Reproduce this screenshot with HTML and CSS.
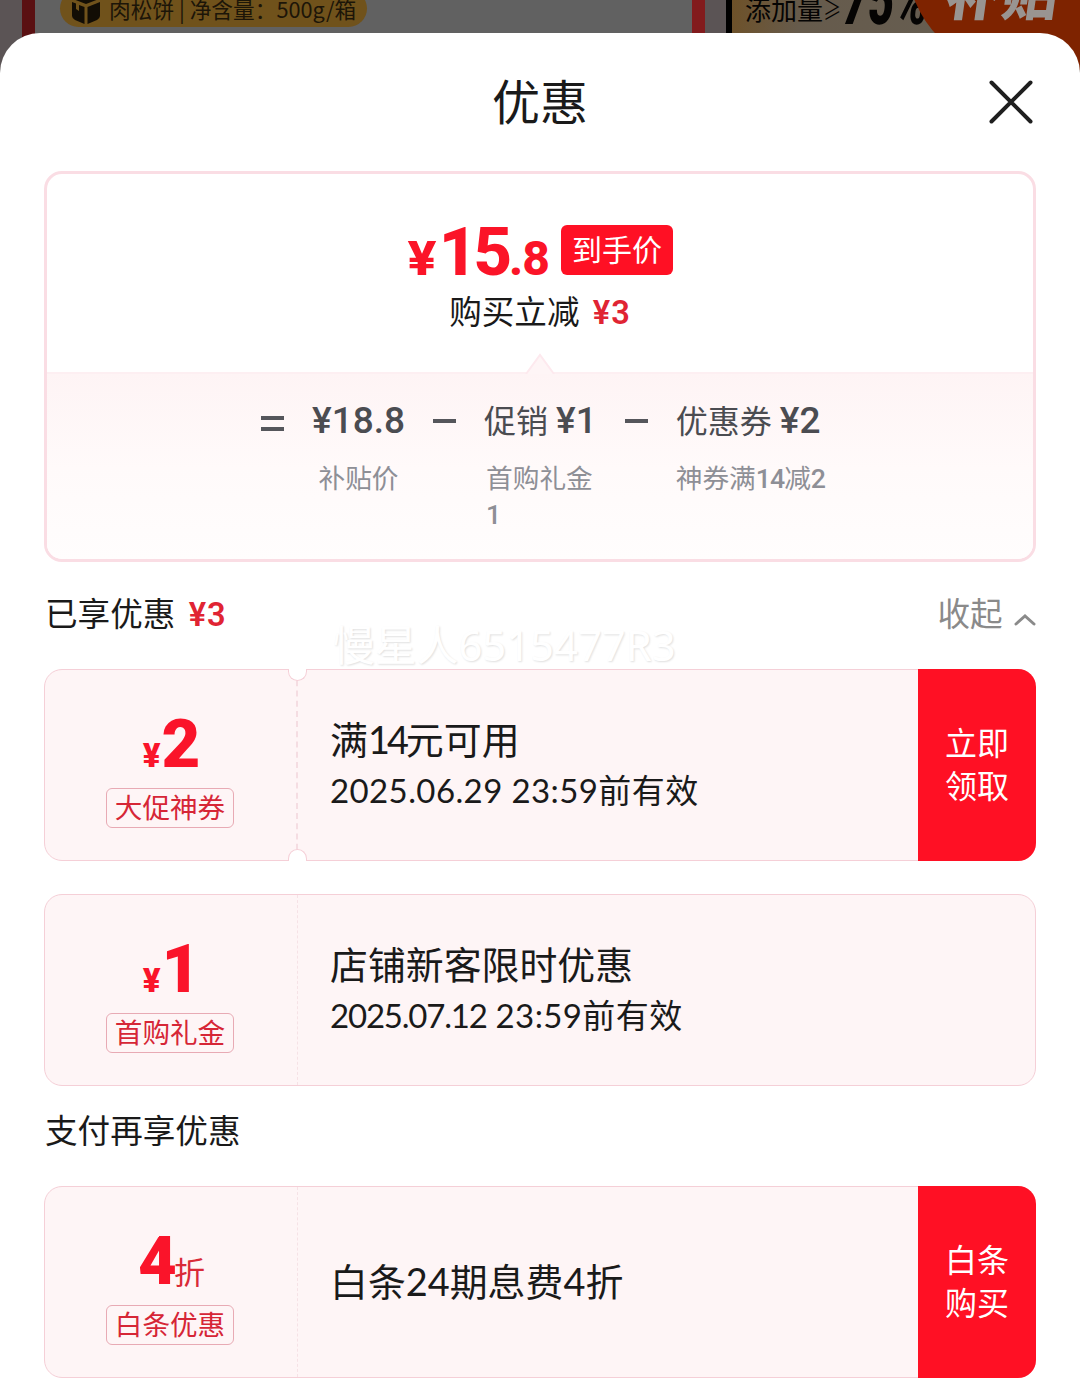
FILE: index.html
```html
<!DOCTYPE html>
<html lang="zh-CN">
<head>
  <meta charset="UTF-8">
  <title>优惠</title>
  <link rel="stylesheet" href="styles.css">
</head>
<body>

<div class="goods">
  <div class="goods-left">
    <div class="pill">
      <svg width="32" height="28" viewBox="0 0 32 28">
        <path d="M3 0 H29 V1 L16 6 L3 1Z" fill="#120d05"/>
        <path d="M2 4 L6 5.500 V11 L9 13 V7 L14.500 9 V26 L5 22 Q2 20 2 18Z M30 4 V18 Q30 20 27 22 L17.500 26 V9Z" fill="#120d05"/>
      </svg>
      <span>肉松饼 | 净含量：500g/箱</span>
    </div>
  </div>
  <div class="goods-right">
    <span class="add">添加量<i>≥</i></span>
    <b class="percent">75%</b>
    <div class="subsidy"><span>补贴</span></div>
  </div>
</div>

<div class="sheet">
  <div class="header">
    <h1>优惠</h1>
    <svg class="close" width="44" height="44" viewBox="0 0 44 44">
      <path d="M2.500 2.500 L41.500 41.500 M41.500 2.500 L2.500 41.500" stroke="#1f1f1f" stroke-width="4" stroke-linecap="round"/>
    </svg>
  </div>

  <div class="summary">
    <div class="price-box">
      <div class="price">
        <span class="yen">¥</span><span class="int">15</span><span class="dec">.8</span>
        <span class="price-tag">到手价</span>
      </div>
      <div class="save">购买立减 <b>¥3</b></div>
    </div>
    <div class="formula">
      <svg class="arrow" width="32" height="22" viewBox="0 0 32 22">
        <path d="M2 22 L16 3 L30 22" fill="#fef5f6" stroke="#fde9ee" stroke-width="2"/>
      </svg>
      <span class="equal"></span>
      <div class="item center">
        <p><b>¥18.8</b></p>
        <small>补贴价</small>
      </div>
      <span class="minus"></span>
      <div class="item promo">
        <p>促销<b class="off">¥1</b></p>
        <small>首购礼金<br><b>1</b></small>
      </div>
      <span class="minus"></span>
      <div class="item">
        <p>优惠券<b class="off">¥2</b></p>
        <small>神券满<b>14</b>减<b>2</b></small>
      </div>
    </div>
  </div>

  <div class="section">
    <div>已享优惠 <b>¥3</b></div>
    <div class="fold">收起
      <svg width="22" height="14" viewBox="0 0 22 14">
        <path d="M2 12 L11 4 L20 12" fill="none" stroke="#8a8a8a" stroke-width="3" stroke-linecap="round"/>
      </svg>
    </div>
    <div class="watermark">慢星人6515477R3</div>
  </div>

  <div class="coupon ticket">
    <div class="amount">
      <div class="num"><span class="yen">¥</span>2</div>
      <div class="tag">大促神券</div>
    </div>
    <div class="info">
      <div class="name">满<span class="tight">14</span>元可用</div>
      <div class="date">2025.06.29 23:59前有效</div>
    </div>
    <div class="btn">立即<br>领取</div>
    <i class="notch top"></i>
    <i class="notch bottom"></i>
  </div>

  <div class="coupon">
    <div class="amount">
      <div class="num"><span class="yen">¥</span>1</div>
      <div class="tag">首购礼金</div>
    </div>
    <div class="info">
      <div class="name">店铺新客限时优惠</div>
      <div class="date"><span class="kern">2025.07.12</span> 23:59前有效</div>
    </div>
  </div>

  <div class="section pay">支付再享优惠</div>

  <div class="coupon">
    <div class="amount">
      <div class="num">4<span class="unit">折</span></div>
      <div class="tag">白条优惠</div>
    </div>
    <div class="info">
      <div class="name">白条24期息费4折</div>
    </div>
    <div class="btn">白条<br>购买</div>
  </div>
</div>

</body>
</html>
```
FILE: styles.css
```css
* {
  box-sizing: border-box;
}

body {
  margin: 0;
  height: 1391px;
  overflow: hidden;
  background: #fff;
  color: #1a1a1a;
  font-family: Lato, "Noto Sans CJK SC", sans-serif;
  white-space: nowrap;
}

h1, p {
  margin: 0;
  font-weight: normal;
}

b {
  font-family: Roboto, "Noto Sans CJK SC", sans-serif;
}

/* dimmed product images behind the sheet */
.goods {
  display: flex;
  height: 90px;
  background: #5b5455;
}

.goods-left {
  width: 683px;
  margin-left: 22px;
  border-left: 13px solid #5a1012;
  border-right: 13px solid #821b1d;
  background: #616161;
}

.pill {
  display: flex;
  width: 307px;
  height: 37px;
  margin: -10px 0 0 25px;
  padding: 8px 0 0 10px;
  border-radius: 19px;
  background: #70521b;
}

.pill svg {
  margin-right: 7px;
}

.pill span {
  color: #1c1508;
  font: 21.7px/21px "Noto Sans CJK SC", sans-serif;
}

.goods-right {
  display: flex;
  flex: 1;
  margin-left: 21px;
  padding-left: 13px;
  border-left: 6px solid #000;
  overflow: hidden;
  background: linear-gradient(100deg, #6e5128 0, #665b4c 70px, #665d50 200px);
}

.add {
  width: 98px;
  font: 26px/26px "Noto Sans CJK SC", sans-serif;
  margin-top: -4px;
  color: #050403;
}

.add i {
  display: inline-block;
  font-style: normal;
  font-weight: 300;
  transform: scaleX(.7);
  transform-origin: left;
}

.percent {
  width: 82px;
  height: 60px;
  margin-top: -34px;
  font-size: 70px;
  font-weight: 900;
  line-height: 68px;
  color: #050403;
  transform: scaleX(.64) skewX(-8deg);
  transform-origin: left;
}

.subsidy {
  position: relative;
  flex: none;
  width: 220px;
  height: 220px;
  margin: -150px 0 0 -18px;
  padding: 114px 0 0 40px;
  border-radius: 0 0 0 110px;
  background: #7e2300;
}

.subsidy span {
  display: inline-block;
  color: #999491;
  font: 900 56px/54px "Noto Sans CJK SC", sans-serif;
  transform: skewX(-8deg);
}

.sheet {
  position: relative;
  height: 1358px;
  margin-top: -57px;
  padding: 0 44px;
  border-radius: 40px 40px 0 0;
  background: #fff;
}

.header {
  display: flex;
  align-items: center;
  justify-content: center;
  height: 138px;
}

.header h1 {
  padding-bottom: 6px;
  font-size: 48px;
  line-height: 60px;
  font-family: "Noto Sans CJK SC", sans-serif;
}

.close {
  position: absolute;
  top: 47px;
  right: 47px;
}

.summary {
  height: 391px;
  border: 3px solid #fadde4;
  border-radius: 18px;
  overflow: hidden;
}

.price-box {
  height: 198px;
  padding-top: 45px;
}

.price {
  display: flex;
  align-items: baseline;
  justify-content: center;
  height: 60px;
  padding-left: 2px;
  color: #fb1428;
  font-family: Roboto, sans-serif;
  font-weight: 800;
  line-height: 66px;
}

.price .yen {
  margin-right: 4px;
  font-size: 48px;
  transform: scaleX(1.12);
}

.price .int {
  font-size: 67px;
  letter-spacing: -4px;
}

.price .dec {
  margin-left: 1px;
  font-size: 48px;
  letter-spacing: -1px;
}

.price-tag {
  align-self: flex-start;
  width: 112px;
  height: 50px;
  margin: 6px 0 0 12px;
  border-radius: 6px;
  background: #ff1024;
  color: #fff;
  font: 30px/46px "Noto Sans CJK SC", sans-serif;
  text-align: center;
}

.save {
  margin-top: 12px;
  font-size: 32.600px;
  line-height: 41px;
  text-align: center;
}

.save b,
.section b {
  margin-left: 5px;
  color: #e02433;
  font-weight: 600;
  letter-spacing: 1px;
}

.formula {
  position: relative;
  display: flex;
  gap: 28px;
  height: 190px;
  padding: 28px 0 0 214px;
  border-top: 2px solid #fdeff2;
  background: linear-gradient(#fef4f5, #fffafa 50%, #fffdfd);
  color: #4b4c51;
}

.arrow {
  position: absolute;
  top: -22px;
  left: 477px;
}

.equal,
.minus {
  flex: none;
  width: 23px;
  height: 4px;
  margin-top: 17px;
  background: #55565b;
}

.equal {
  height: 15px;
  margin-top: 14px;
  border: solid #55565b;
  border-width: 4px 0;
  background: none;
}

.item p {
  font-size: 32px;
  line-height: 38px;
}

.item p b {
  font-size: 37px;
  font-weight: 500;
}

.item p .off {
  margin-left: 8px;
}

.item small {
  display: block;
  margin-top: 20px;
  color: #8e8f96;
  font-size: 26.700px;
  line-height: 36px;
}

.item small b {
  font-weight: 500;
  letter-spacing: -1px;
}

.center {
  text-align: center;
}

.promo small {
  padding-left: 2px;
}

.section {
  position: relative;
  display: flex;
  justify-content: space-between;
  height: 107px;
  padding: 32px 0 0 1px;
  font-size: 32.600px;
  line-height: 40px;
}

.fold {
  color: #8a8a8a;
}

.fold svg {
  margin-left: 3px;
}

.section.pay {
  height: 100px;
  padding-top: 25px;
}

.watermark {
  position: absolute;
  top: 56px;
  left: 289px;
  color: #fff;
  font: 41.800px/54px "Noto Sans", "Noto Sans CJK SC", sans-serif;
  text-shadow: 1px 1px 2px #e0e0e0;
}

.coupon {
  position: relative;
  display: flex;
  height: 192px;
  border: 1px solid #f5cfd7;
  border-radius: 18px;
  background: #fef5f6;
}

.coupon.ticket {
  margin-bottom: 33px;
}

.amount {
  display: flex;
  flex-direction: column;
  align-items: center;
  width: 253px;
  padding: 40px 2px 0 0;
  border-right: 1px dashed #f6e2e6;
}

.ticket .amount {
  padding-right: 1px;
  border-right: 2px dashed #f5dde2;
}

.num {
  height: 78px;
  color: #fa142a;
  font: 900 67px/68px Roboto, sans-serif;
  letter-spacing: -3px;
}

.num .yen {
  margin-right: 4px;
  font-size: 33px;
}

.num .unit {
  color: #d92a38;
  font: 31px "Noto Sans CJK SC", sans-serif;
}

.tag {
  width: 128px;
  height: 40px;
  border: 1px solid #e8aab4;
  border-radius: 6px;
  color: #d62636;
  font: 27.600px/34px "Noto Sans CJK SC", sans-serif;
  text-align: center;
}

.info {
  flex: 1;
  align-self: center;
  padding: 0 0 1px 32px;
}

.name {
  font-size: 37.900px;
  line-height: 50px;
}

.tight {
  letter-spacing: -3px;
}

.date {
  font-size: 33px;
  line-height: 50px;
  letter-spacing: .4px;
}

.kern {
  letter-spacing: -1.200px;
}

.btn {
  width: 118px;
  margin: -1px;
  padding-top: 52px;
  border-radius: 0 18px 18px 0;
  background: #ff1024;
  color: #fff;
  font-size: 32px;
  line-height: 43px;
  text-align: center;
}

.notch {
  position: absolute;
  left: 243px;
  width: 19px;
  height: 12px;
  border: 1px solid #f5cfd7;
  background: #fff;
}

.notch.top {
  top: -1px;
  border-top: 0;
  border-radius: 0 0 10px 10px;
}

.notch.bottom {
  bottom: -1px;
  border-bottom: 0;
  border-radius: 10px 10px 0 0;
}
```
